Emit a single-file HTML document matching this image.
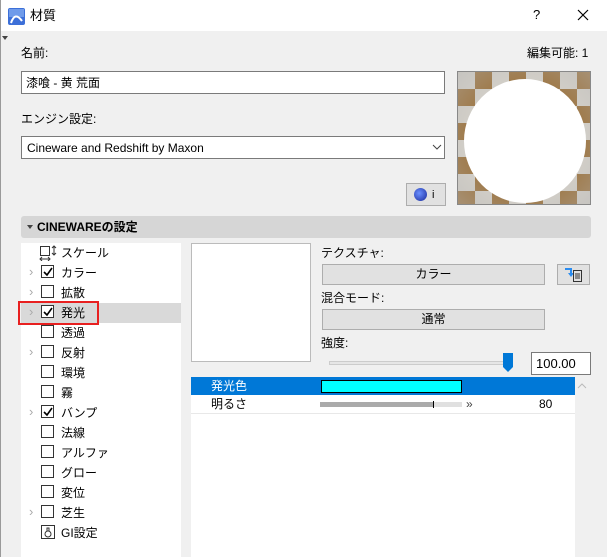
<!DOCTYPE html>
<html><head><meta charset="utf-8"><style>
*{margin:0;padding:0;box-sizing:border-box}
body{width:607px;height:557px;overflow:hidden;background:#f0f0f0;font-family:"Liberation Sans","Noto Sans CJK JP",sans-serif;font-size:12px;color:#000;position:relative}
.a{position:absolute}
.t{position:absolute;white-space:nowrap;line-height:14px}
.box{position:absolute;background:#fff;border:1px solid #7a7a7a}
.btn{position:absolute;background:#e1e1e1;border:1px solid #adadad;text-align:center;line-height:19px}
.cb{position:absolute;left:41px;width:13px;height:13px;border:1px solid #333;background:#fff}
.ar{position:absolute;left:29px;color:#aaa;font-size:13px;line-height:14px}
</style></head><body>
<div class="a" style="left:0;top:0;width:607px;height:31px;background:#fff"></div>
<div class="a" style="left:0;top:0;width:1px;height:557px;background:#9a9a9a"></div>
<svg class="a" style="left:8px;top:8px" width="17" height="17"><rect width="17" height="17" rx="2" fill="#3c6fd8"/><rect x="1" y="1" width="15" height="8" fill="#6f9bea"/><path d="M3 15 Q7 3 14 13" stroke="#fff" stroke-width="2" fill="none"/></svg>
<div class="t" style="left:30px;top:9px;font-size:13px">材質</div>
<div class="t" style="left:533px;top:8px;font-size:13px">?</div>
<svg class="a" style="left:577px;top:9px" width="12" height="12"><path d="M1 1L11 11M11 1L1 11" stroke="#000" stroke-width="1.2"/></svg>
<div class="a" style="left:2px;top:36px;width:0;height:0;border-left:3px solid transparent;border-right:3px solid transparent;border-top:4px solid #444"></div>
<div class="t" style="left:21px;top:46px">名前:</div>
<div class="t" style="left:527px;top:46px">編集可能: 1</div>
<div class="box" style="left:21px;top:71px;width:424px;height:23px"></div>
<div class="t" style="left:26px;top:76px">漆喰 - 黄 荒面</div>
<div class="t" style="left:21px;top:112px">エンジン設定:</div>
<div class="box" style="left:21px;top:136px;width:424px;height:23px"></div>
<div class="t" style="left:27px;top:141px">Cineware and Redshift by Maxon</div>
<svg class="a" style="left:432px;top:144px" width="10" height="6"><path d="M1 1L5 5L9 1" stroke="#444" fill="none"/></svg>
<div class="btn" style="left:406px;top:183px;width:40px;height:23px"></div>
<div class="a" style="left:414px;top:188px;width:13px;height:13px;border-radius:50%;background:radial-gradient(circle at 40% 40%,#6a8fff,#1a2a9a)"></div>
<div class="t" style="left:432px;top:188px;font-size:11px">i</div>
<div class="a" style="left:457px;top:71px;width:134px;height:134px;border:1px solid #888;overflow:hidden;background:repeating-conic-gradient(#9a6e35 0 25%,#d8d4cc 0 50%) 0 0/34px 34px">
<div class="a" style="left:0;top:0;width:134px;height:134px;background:radial-gradient(ellipse at center,rgba(230,230,230,0) 40%,rgba(180,180,180,.5) 100%)"></div>
<div class="a" style="left:6px;top:7px;width:122px;height:124px;border-radius:50%;background:#fff"></div>
</div>
<div class="a" style="left:21px;top:216px;width:570px;height:22px;background:#d6d6d6;border-radius:3px"></div>
<div class="a" style="left:27px;top:225px;width:0;height:0;border-left:3px solid transparent;border-right:3px solid transparent;border-top:4px solid #444"></div>
<div class="t" style="left:37px;top:220px;font-weight:bold">CINEWAREの設定</div>
<div class="a" style="left:21px;top:243px;width:160px;height:314px;background:#fff"></div>
<div class="a" style="left:21px;top:303px;width:160px;height:20px;background:#d9d9d9"></div>
<div class="a" style="left:18px;top:301px;width:81px;height:24px;border:2px solid #e82020"></div>
<svg class="a" style="left:39px;top:245px" width="20" height="16"><rect x="1.5" y="1.5" width="9" height="9" fill="none" stroke="#333"/><path d="M15 1v9M13 3l2-2 2 2M13 8l2 2 2-2M1 14h10M3 12l-2 2 2 2M9 12l2 2-2 2" stroke="#333" fill="none"/></svg>
<div class="t" style="left:61px;top:246px">スケール</div>
<div class="ar" style="top:265px">›</div><div class="cb" style="top:265px"></div><div class="t" style="left:61px;top:266px">カラー</div>
<div class="ar" style="top:285px">›</div><div class="cb" style="top:285px"></div><div class="t" style="left:61px;top:286px">拡散</div>
<div class="ar" style="top:305px">›</div><div class="cb" style="top:305px"></div><div class="t" style="left:61px;top:306px">発光</div>
<div class="cb" style="top:325px"></div><div class="t" style="left:61px;top:326px">透過</div>
<div class="ar" style="top:345px">›</div><div class="cb" style="top:345px"></div><div class="t" style="left:61px;top:346px">反射</div>
<div class="cb" style="top:365px"></div><div class="t" style="left:61px;top:366px">環境</div>
<div class="cb" style="top:385px"></div><div class="t" style="left:61px;top:386px">霧</div>
<div class="ar" style="top:405px">›</div><div class="cb" style="top:405px"></div><div class="t" style="left:61px;top:406px">バンプ</div>
<div class="cb" style="top:425px"></div><div class="t" style="left:61px;top:426px">法線</div>
<div class="cb" style="top:445px"></div><div class="t" style="left:61px;top:446px">アルファ</div>
<div class="cb" style="top:465px"></div><div class="t" style="left:61px;top:466px">グロー</div>
<div class="cb" style="top:485px"></div><div class="t" style="left:61px;top:486px">変位</div>
<div class="ar" style="top:505px">›</div><div class="cb" style="top:505px"></div><div class="t" style="left:61px;top:506px">芝生</div>
<svg class="a" style="left:40px;top:524px" width="16" height="16"><rect x="1.5" y="1.5" width="13" height="13" fill="none" stroke="#333"/><circle cx="8" cy="10" r="3" fill="none" stroke="#333"/><path d="M7 7V4h2v3" stroke="#333" fill="none"/></svg>
<div class="t" style="left:61px;top:526px">GI設定</div>
<svg class="a" style="left:41px;top:265px" width="14" height="14"><path d="M3 7l3 3 5-7" stroke="#000" stroke-width="1.6" fill="none"/></svg>
<svg class="a" style="left:41px;top:305px" width="14" height="14"><path d="M3 7l3 3 5-7" stroke="#000" stroke-width="1.6" fill="none"/></svg>
<svg class="a" style="left:41px;top:405px" width="14" height="14"><path d="M3 7l3 3 5-7" stroke="#000" stroke-width="1.6" fill="none"/></svg>
<div class="a" style="left:191px;top:243px;width:120px;height:119px;background:#fff;border:1px solid #bbb"></div>
<div class="t" style="left:321px;top:246px">テクスチャ:</div>
<div class="btn" style="left:322px;top:264px;width:223px;height:21px">カラー</div>
<div class="btn" style="left:557px;top:264px;width:33px;height:21px"></div>
<svg class="a" style="left:564px;top:266px" width="20" height="17"><path d="M1 3h6v5" stroke="#2a8cf0" stroke-width="2" fill="none"/><path d="M4 7l3 4 3-4z" fill="#2a8cf0"/><rect x="9.5" y="4.5" width="8" height="11" fill="none" stroke="#333"/><path d="M11 8h5M11 10h5M11 12h5" stroke="#333"/></svg>
<div class="t" style="left:321px;top:291px">混合モード:</div>
<div class="btn" style="left:322px;top:309px;width:223px;height:21px">通常</div>
<div class="t" style="left:321px;top:336px">強度:</div>
<div class="a" style="left:329px;top:361px;width:184px;height:4px;background:#e6e6e6;border:1px solid #ccc"></div>
<div class="a" style="left:503px;top:353px;width:10px;height:14px;background:#0078d7"></div>
<div class="a" style="left:503px;top:367px;width:0;height:0;border-left:5px solid transparent;border-right:5px solid transparent;border-top:5px solid #0078d7"></div>
<div class="box" style="left:531px;top:352px;width:60px;height:23px"></div>
<div class="t" style="left:536px;top:357px;font-size:13px">100.00</div>
<div class="a" style="left:191px;top:377px;width:384px;height:180px;background:#fff"></div>
<div class="a" style="left:191px;top:377px;width:384px;height:18px;background:#0078d7"></div>
<div class="a" style="left:191px;top:413px;width:384px;height:1px;background:#e8e8e8"></div>
<div class="t" style="left:211px;top:379px;color:#fff">発光色</div>
<div class="a" style="left:321px;top:380px;width:141px;height:13px;background:#00ffff;border:1px solid #000"></div>
<div class="t" style="left:211px;top:397px">明るさ</div>
<div class="a" style="left:320px;top:402px;width:142px;height:5px;background:#e0e0e0"></div>
<div class="a" style="left:320px;top:402px;width:113px;height:5px;background:#aaa"></div>
<div class="a" style="left:433px;top:401px;width:1px;height:7px;background:#000"></div>
<div class="t" style="left:466px;top:397px;color:#444">»</div>
<div class="t" style="left:539px;top:397px">80</div>
<svg class="a" style="left:577px;top:383px" width="10" height="6"><path d="M1 5L5 1L9 5" stroke="#bbb" fill="none"/></svg>
</body></html>
